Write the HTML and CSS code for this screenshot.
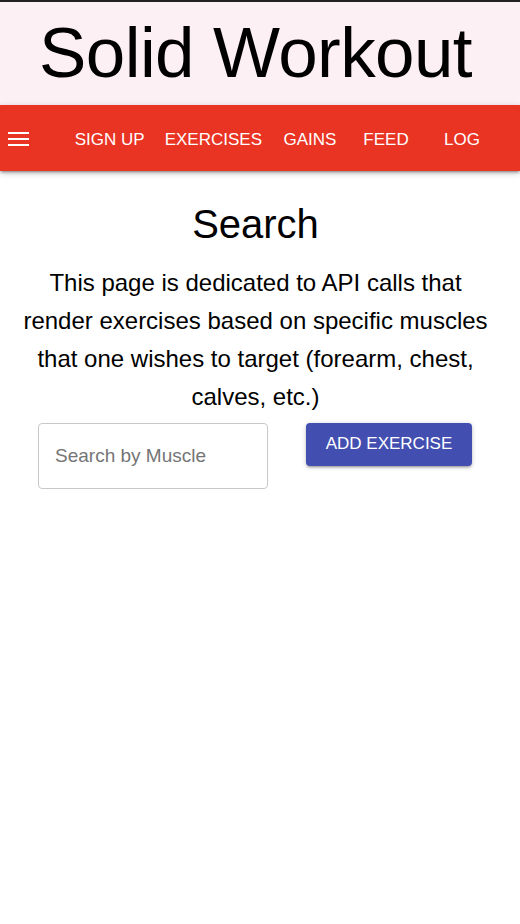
FILE: index.html
```html
<!DOCTYPE html>
<html>
<head>
<meta charset="utf-8">
<link rel="stylesheet" href="styles.css">
</head>
<body>
<header class="site-header">
  <h1 class="site-title">Solid Workout</h1>
</header>
<nav class="navbar">
  <a class="menu-btn" href="#" aria-label="menu">
    <svg width="22" height="16" viewBox="0 0 22 16"><rect x="0" y="1" width="21" height="2" fill="#fff"/><rect x="0" y="7" width="21" height="2" fill="#fff"/><rect x="0" y="13" width="21" height="2" fill="#fff"/></svg>
  </a>
  <ul class="nav-links">
    <li><a href="#">SIGN UP</a></li>
    <li><a href="#">EXERCISES</a></li>
    <li><a href="#">GAINS</a></li>
    <li><a href="#">FEED</a></li>
    <li><a href="#">LOG</a></li>
  </ul>
</nav>
<main class="content">
  <h2 class="page-title">Search</h2>
  <p class="intro">This page is dedicated to API calls that render exercises based on specific muscles that one wishes to target (forearm, chest, calves, etc.)</p>
  <div class="controls">
    <input class="search-input" type="text" placeholder="Search by Muscle">
    <button class="add-btn">ADD EXERCISE</button>
  </div>
</main>
</body>
</html>
```
FILE: styles.css
```css
* { box-sizing: border-box; }
html, body { margin: 0; padding: 0; background: #fff; }
body {
  font-family: "Liberation Sans", Arial, Helvetica, sans-serif;
  color: #000;
  border-top: 2px solid #222;
}
.site-header {
  background: #fdf0f4;
  height: 103px;
  display: flex;
  align-items: center;
  justify-content: center;
  padding-right: 9px;
}
.site-title {
  margin: 0;
  font-weight: 400;
  font-size: 71px;
  letter-spacing: -0.6px;
  line-height: 1;
  padding-bottom: 2px;
}
.navbar {
  background: #e93323;
  height: 66px;
  display: flex;
  align-items: center;
  box-shadow: 0 2px 2px 0 rgba(0,0,0,.14), 0 3px 1px -2px rgba(0,0,0,.12), 0 2px 6px 0 rgba(0,0,0,.25);
  position: relative;
}
.menu-btn {
  display: flex;
  align-items: center;
  padding-left: 8px;
  padding-top: 2px;
  height: 100%;
}
.nav-links {
  list-style: none;
  margin: 0 20px 0 auto;
  padding: 0;
  display: flex;
  height: 100%;
}
.nav-links li { display: flex; }
.nav-links a {
  display: flex;
  align-items: center;
  justify-content: center;
  min-width: 76px;
  padding: 4px 10px 0;
  color: #fff;
  text-decoration: none;
  font-size: 17px;
}
.content {
  display: flex;
  flex-direction: column;
  align-items: center;
  padding-right: 9px;
}
.page-title {
  margin: 29px 0 0;
  font-size: 40px;
  font-weight: 400;
  line-height: 48px;
}
.intro {
  margin: 16px 0 0;
  width: 476px;
  text-align: center;
  font-size: 24px;
  line-height: 38px;
}
.controls {
  align-self: stretch;
  display: flex;
  align-items: flex-start;
  padding-left: 38px;
  gap: 38px;
  margin-top: 7px;
}
.search-input {
  width: 230px;
  height: 66px;
  border: 1px solid #c8c8c8;
  border-radius: 4px;
  padding: 0 16px;
  font-family: "Liberation Sans", Arial, Helvetica, sans-serif;
  font-size: 19px;
  color: #333;
  outline: none;
  background: #fff;
}
.search-input::placeholder { color: #757575; }
.add-btn {
  width: 166px;
  height: 43px;
  background: #434fb0;
  color: #fff;
  border: none;
  border-radius: 4px;
  font-family: "Liberation Sans", Arial, Helvetica, sans-serif;
  font-size: 17px;
  letter-spacing: 0;
  box-shadow: 0 2px 2px 0 rgba(0,0,0,.14), 0 3px 1px -2px rgba(0,0,0,.12), 0 1px 5px 0 rgba(0,0,0,.2);
  cursor: pointer;
  padding: 0 0 2px;
}
```
